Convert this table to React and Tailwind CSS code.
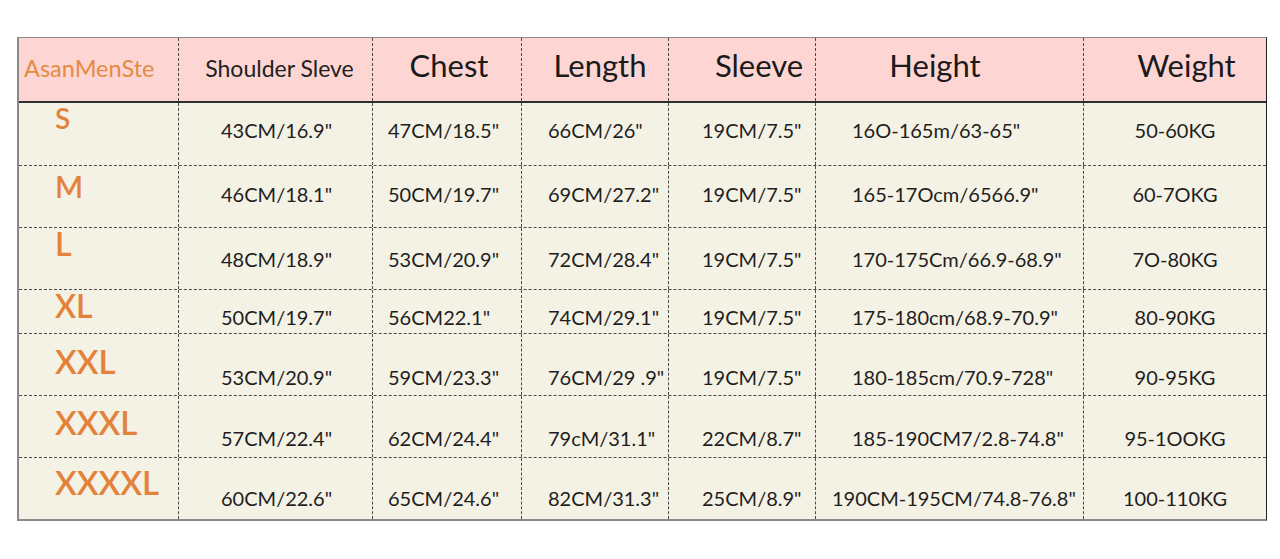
import React from "react";

const font = { fontFamily: "Lato, 'Open Sans', sans-serif" };

const rows = [
  {
    size: "S",
    h: "h-[63px]",
    label: "text-[28px] pt-[1px]",
    shift: "pb-[8px]",
    cells: ['43CM/16.9"', '47CM/18.5"', '66CM/26"', '19CM/7.5"', '16O-165m/63-65"', "50-60KG"],
  },
  {
    size: "M",
    h: "h-[62px]",
    label: "text-[30px] pt-[5px]",
    shift: "pb-[6px]",
    cells: ['46CM/18.1"', '50CM/19.7"', '69CM/27.2"', '19CM/7.5"', '165-17Ocm/6566.9"', "60-7OKG"],
  },
  {
    size: "L",
    h: "h-[62px]",
    label: "text-[32px] pt-0",
    shift: "",
    cells: ['48CM/18.9"', '53CM/20.9"', '72CM/28.4"', '19CM/7.5"', '170-175Cm/66.9-68.9"', "7O-80KG"],
  },
  {
    size: "XL",
    h: "h-[44px]",
    label: "text-[32px] pt-0",
    shift: "pt-[10px]",
    cells: ['50CM/19.7"', '56CM22.1"', '74CM/29.1"', '19CM/7.5"', '175-180cm/68.9-70.9"', "80-90KG"],
  },
  {
    size: "XXL",
    h: "h-[62px]",
    label: "text-[33px] pt-[11px]",
    shift: "pt-[24px]",
    cells: ['53CM/20.9"', '59CM/23.3"', '76CM/29 .9"', '19CM/7.5"', '180-185cm/70.9-728"', "90-95KG"],
  },
  {
    size: "XXXL",
    h: "h-[62px]",
    label: "text-[33px] pt-[10px]",
    shift: "pt-[22px]",
    cells: ['57CM/22.4"', '62CM/24.4"', '79cM/31.1"', '22CM/8.7"', '185-190CM7/2.8-74.8"', "95-1OOKG"],
  },
  {
    size: "XXXXL",
    h: "h-[61px]",
    label: "text-[33px] pt-[8px]",
    shift: "pt-[18px]",
    cells: ['60CM/22.6"', '65CM/24.6"', '82CM/31.3"', '25CM/8.9"', '190CM-195CM/74.8-76.8"', "100-110KG"],
    last: true,
  },
];

// widths + left padding for the data columns
const cols = [
  "w-[194px] justify-start pl-[42px]",
  "w-[149px] justify-start pl-[15px]",
  "w-[147px] justify-start pl-[26px]",
  "w-[147px] justify-start pl-[33px]",
  "w-[268px] justify-start pl-[36px]",
  "w-[182px] justify-center",
];

const dash = "border-r border-dashed border-[#4a4a4a]";

const SizeRow = ({ row }) => (
  <div className={`flex ${row.h} ${row.last ? "" : "border-b border-dashed border-[#4a4a4a]"}`}>
    <div className={`w-[160px] shrink-0 ${dash}`}>
      <div className={`pl-[36px] leading-none font-semibold text-[#e3823a] ${row.label}`}>{row.size}</div>
    </div>
    {row.cells.map((c, i) => {
      let cls = cols[i];
      if (i === 4 && row.last) cls = "w-[268px] justify-start pl-[16px]";
      return (
        <div
          key={i}
          className={`flex shrink-0 items-center text-[20px] text-[#1e1e1e] ${cls} ${row.shift} ${i < 5 ? dash : ""}`}
        >
          {c}
        </div>
      );
    })}
  </div>
);

export default function App() {
  return (
    <div className="min-h-screen bg-white pt-[37px] pl-[17px]" style={font}>
      <div className="w-[1250px] border-t border-l-2 border-b-2 border-r border-t-[#8a8a8a] border-l-[#8a8a8a] border-b-[#8a8a8a] border-r-[#222] bg-[#f4f1e5]">
        {/* header */}
        <div className="flex h-[65px] border-b-2 border-[#2e2e2e] bg-[#fdd6d3]">
          <div className={`flex w-[160px] shrink-0 items-center pl-[5px] pb-[2px] text-[23.5px] text-[#e58a43] ${dash}`}>
            AsanMenSte
          </div>
          <div className={`flex w-[194px] shrink-0 items-center justify-center pl-[8px] pb-[2px] text-[23px] text-[#222] ${dash}`}>
            Shoulder Sleve
          </div>
          <div className={`flex w-[149px] shrink-0 items-center justify-center pl-[4px] pb-[8px] text-[31px] text-[#1a1a1a] ${dash}`}>
            Chest
          </div>
          <div className={`flex w-[147px] shrink-0 items-center justify-center pl-[10px] pb-[8px] text-[31px] text-[#1a1a1a] ${dash}`}>
            Length
          </div>
          <div className={`flex w-[147px] shrink-0 items-center justify-center pl-[34px] pb-[8px] text-[31px] text-[#1a1a1a] ${dash}`}>
            Sleeve
          </div>
          <div className={`flex w-[268px] shrink-0 items-center justify-center pr-[29px] pb-[8px] text-[31px] text-[#1a1a1a] ${dash}`}>
            Height
          </div>
          <div className="flex w-[182px] shrink-0 items-center justify-center pl-[23px] pb-[8px] text-[31px] text-[#1a1a1a]">
            Weight
          </div>
        </div>
        {rows.map((r) => (
          <SizeRow key={r.size} row={r} />
        ))}
      </div>
    </div>
  );
}
